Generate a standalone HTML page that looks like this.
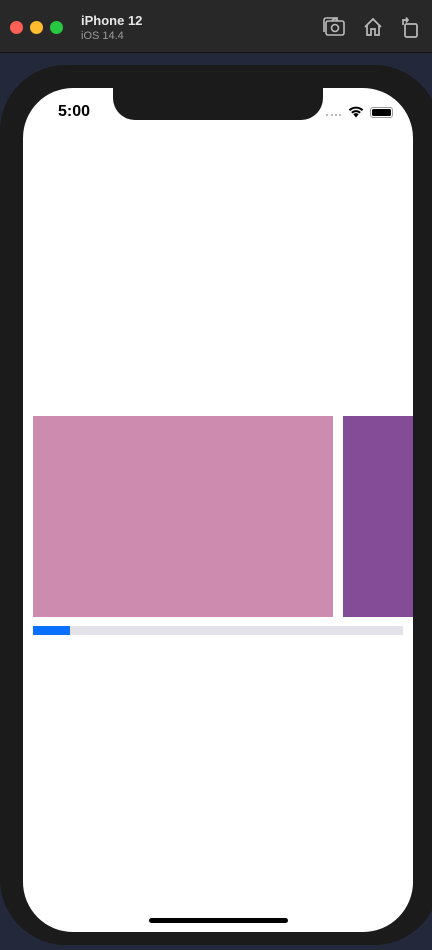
<!DOCTYPE html>
<html><head><meta charset="utf-8"><style>
*{margin:0;padding:0;box-sizing:border-box}
html,body{width:432px;height:950px;overflow:hidden}
body{background:#23283a;font-family:"Liberation Sans",sans-serif;position:relative}
.bar{position:absolute;left:0;top:0;width:432px;height:53px;background:#282828;border-bottom:1px solid #111}
.dot{position:absolute;top:21px;width:13px;height:13px;border-radius:50%}
.t1{position:absolute;left:81px;top:13px;color:#e6e6e6;font-weight:bold;font-size:13px}
.t2{position:absolute;left:81px;top:30px;color:#9a9a9a;font-size:11px}
.body{position:absolute;left:0;top:65px;width:440px;height:880px;background:#1b1b1b;border-radius:66px}
.screen{position:absolute;left:23px;top:88px;width:390px;height:844px;background:#fff;border-radius:50px;overflow:hidden}
.notch{position:absolute;left:90px;top:-1px;width:210px;height:33px;background:#1b1b1b;border-radius:0 0 22px 22px}
</style></head><body>
<div class="bar">
<div class="dot" style="left:10px;background:#fe5f57"></div>
<div class="dot" style="left:30px;background:#febc2e"></div>
<div class="dot" style="left:50px;background:#28c840"></div>
<div class="t1">iPhone 12</div><div class="t2">iOS 14.4</div>
<svg style="position:absolute;left:322px;top:16px" width="24" height="22" viewBox="0 0 24 22" fill="none" stroke="#bbb" stroke-width="1.6"><rect x="4" y="5" width="18" height="14" rx="2"/><path d="M2 16V4a2 2 0 0 1 2-2h12"/><circle cx="13" cy="12" r="3.5"/><path d="M10 5l1.5-2h3L16 5"/></svg>
<svg style="position:absolute;left:363px;top:17px" width="20" height="20" viewBox="0 0 20 20" fill="none" stroke="#bbb" stroke-width="1.7"><path d="M2 10L10 2l8 8M4 8v10h4v-6h4v6h4V8"/></svg>
<svg style="position:absolute;left:400px;top:16px" width="20" height="22" viewBox="0 0 20 22" fill="none" stroke="#bbb" stroke-width="1.7"><rect x="5" y="8" width="12" height="13" rx="1.5"/><path d="M3 9V4h5M6 1.5L8 4 6 6.5"/></svg>
</div>
<div class="body"></div>
<div class="screen">
<div class="notch"></div>
<div style="position:absolute;left:35px;top:15px;font-size:16px;font-weight:bold;color:#000">5:00</div>
<div style="position:absolute;left:303px;top:26px;width:15px;border-top:2px dotted #bbb"></div>
<svg style="position:absolute;left:324px;top:17px" width="18" height="13" viewBox="0 0 16 12"><path d="M8 11.5L5.5 8.5a3.6 3.6 0 0 1 5 0z M3.5 6.5a6.5 6.5 0 0 1 9 0l-1.3 1.3a4.7 4.7 0 0 0-6.4 0z M1.3 4.2a9.6 9.6 0 0 1 13.4 0l-1.3 1.3a7.8 7.8 0 0 0-10.8 0z" fill="#000"/></svg>
<div style="position:absolute;left:347px;top:19px;width:23px;height:11px;border:1px solid #999;border-radius:3px;padding:1px"><div style="width:100%;height:100%;background:#000;border-radius:1.5px"></div></div>
<div style="position:absolute;left:10px;top:328px;width:300px;height:201px;background:#cd8caf"></div>
<div style="position:absolute;left:320px;top:328px;width:80px;height:201px;background:#844c97"></div>
<div style="position:absolute;left:10px;top:538px;width:370px;height:9px;background:#e2e2e8"></div>
<div style="position:absolute;left:10px;top:538px;width:37px;height:9px;background:#0a70ff"></div>
<div style="position:absolute;left:126px;top:830px;width:139px;height:5px;background:#000;border-radius:3px"></div>
</div>
</body></html>
